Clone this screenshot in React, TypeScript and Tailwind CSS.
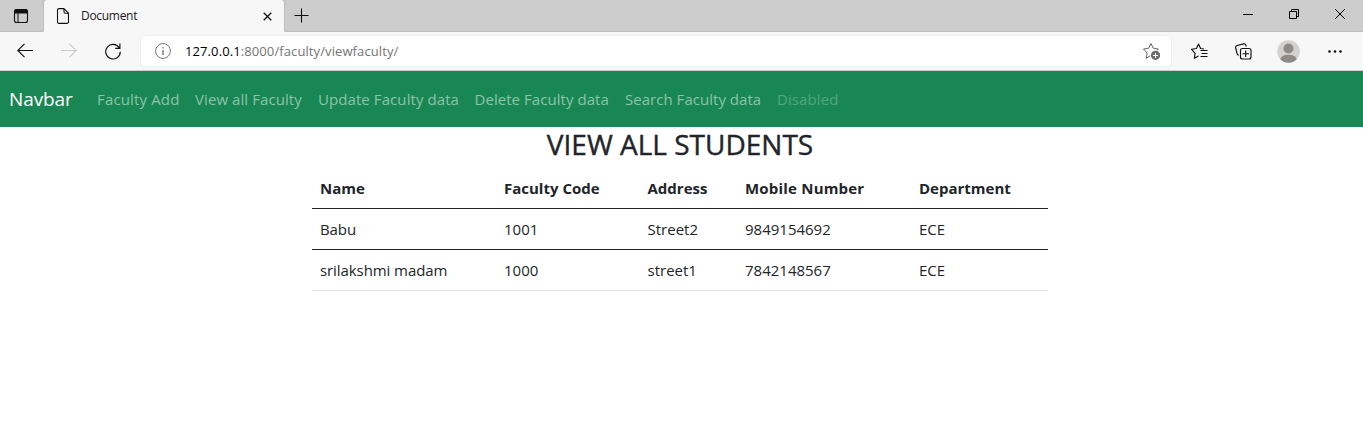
import React from "react";

const navItems = [
  { label: "Faculty Add", cls: "w-[82.5px] tracking-[0.15px]" },
  { label: "View all Faculty", cls: "w-[107.5px] tracking-[0.08px]" },
  { label: "Update Faculty data", cls: "w-[141px] tracking-[0.08px]" },
  { label: "Delete Faculty data", cls: "w-[135px] tracking-[0.05px]" },
  { label: "Search Faculty data", cls: "w-[136.5px] tracking-[0.03px]" },
];

const headers = ["Name", "Faculty Code", "Address", "Mobile Number", "Department"];

const faculty = [
  ["Babu", "1001", "Street2", "9849154692", "ECE"],
  ["srilakshmi madam", "1000", "street1", "7842148567", "ECE"],
];

function TabStrip() {
  return (
    <div className="flex h-8 bg-[#cdcdcd]">
      <div className="flex w-11 items-center justify-center rounded-br-[4px] border-r border-b border-[#bdbdbd]">
        <svg className="-ml-[1px] block h-4 w-4" viewBox="0 0 16 16" fill="none" stroke="#111">
          <rect x="1.5" y="1.5" width="13" height="13" rx="2" strokeWidth="1.1" />
          <path d="M1.5 5V3.5a2 2 0 0 1 2-2h9a2 2 0 0 1 2 2V5z" fill="#111" />
          <path d="M5 5v9.5" />
        </svg>
      </div>
      <div className="flex h-8 w-60 items-center rounded-t-[4px] bg-[#f7f7f7]">
        <svg className="ml-3 block h-4 w-[14px]" viewBox="0 0 14 16" fill="none" stroke="#111" strokeWidth="1.1" strokeLinejoin="round">
          <path d="M3 .6h5l4.5 4.6v8.7a1.5 1.5 0 0 1-1.5 1.5H3a1.5 1.5 0 0 1-1.5-1.5V2.1A1.5 1.5 0 0 1 3 .6zM8 .6v3.2a1.4 1.4 0 0 0 1.4 1.4h3.1" />
        </svg>
        <span className="ml-[11px] flex-1 text-[12px] leading-4 tracking-[-0.3px] text-[#1b1b1b]">Document</span>
        <svg className="mr-3 block h-[9px] w-[9px]" viewBox="0 0 9 9" stroke="#111" strokeWidth="1.3">
          <path d="M.7.7l7.6 7.6M8.3.7L.7 8.3" />
        </svg>
      </div>
      <div className="flex flex-1 items-center rounded-bl-[4px] border-b border-l border-[#bdbdbd] pl-[9px]">
        <svg className="block h-[15px] w-[15px]" viewBox="0 0 15 15" stroke="#111" strokeWidth="1.1">
          <path d="M.5 7.5h14M7.5.5v14" />
        </svg>
      </div>
      <div className="flex w-[138px] justify-between border-b border-[#bdbdbd] pt-[8px] pr-[17px] pl-[18px]">
        <svg className="block h-3 w-[10px]" viewBox="0 0 10 12" stroke="#000">
          <path d="M0 6.5h10" />
        </svg>
        <svg className="block h-3 w-3" viewBox="0 0 12 12" fill="none" stroke="#000">
          <path d="M1.5 3.5h7v7h-7zM3.500 3.500v-2h7v7h-2" />
        </svg>
        <svg className="block h-3 w-3" viewBox="0 0 12 12" stroke="#000">
          <path d="M1 1l10 10M11 1L1 11" />
        </svg>
      </div>
    </div>
  );
}

function Toolbar() {
  return (
    <div className="flex h-[39px] border-b border-[#cfcfcf] bg-[#f7f7f7] pt-1">
      <div className="flex h-[30px] w-[141px] items-center pl-[17px]">
        <svg className="block h-4 w-4" viewBox="0 0 16 16" fill="none" stroke="#111" strokeWidth="1.15">
          <path d="M16 7.500H.8M7.500.8L.8 7.500l6.700 6.700" />
        </svg>
        <svg className="ml-7 block h-4 w-4" viewBox="0 0 16 16" fill="none" stroke="#cacaca" strokeWidth="1.15">
          <path d="M0 7.500h15.200M8.500.8l6.700 6.700-6.700 6.700" />
        </svg>
        <svg className="ml-7 block h-[17px] w-4" viewBox="0 0 16 17" fill="none" stroke="#111" strokeWidth="1.15">
          <path d="M14.300 5A7.300 7.300 0 1 0 15.300 8.700M14.900.500V5.300H10.200" />
        </svg>
      </div>
      <div className="flex h-[30px] w-[1030px] items-center rounded-[4px] bg-white shadow-[0_0_2px_rgba(0,0,0,0.12)]">
        <svg className="ml-[14px] block h-4 w-4" viewBox="0 0 16 16" fill="none" stroke="#767676">
          <circle cx="8" cy="8" r="7.4" />
          <path d="M8 7v5M8 4.200v1.400" strokeWidth="1.4" />
        </svg>
        <span className="ml-[14px] flex-1 text-[13px] leading-5 tracking-[0.1px] text-[#757575]">
          <span className="text-black">127.0.0.1</span>:8000/faculty/viewfaculty/
        </span>
        <svg className="mr-[11px] block h-[18px] w-[18px]" viewBox="0 0 18 18" fill="none" stroke="#686868">
          <path d="M8 13.800L4.300 16.300l.8-5.300L1.500 7l5.200-.8L9 1.500l2.200 4.700 5.200.8L15 8.500" strokeLinejoin="round" />
          <circle cx="13.500" cy="13.300" r="4.600" fill="#6b6b6b" stroke="none" />
          <path d="M11 13.500h5M13.500 11v5" stroke="#fff" />
        </svg>
      </div>
      <div className="flex h-[30px] flex-1 items-center">
        <svg className="ml-5 block h-[17px] w-[17px]" viewBox="0 0 17 17" fill="none" stroke="#111" strokeWidth="1.15" strokeLinejoin="round">
          <path d="M7.500 13L3.300 15.300l.8-5L.6 6.300l4.800-.8L7.500 1l2.100 4.500 3.400.5M9.500 7.500h7M10.500 10.500h6M9.500 13.500h7" />
        </svg>
        <svg className="ml-[27px] block h-[17px] w-[17px]" viewBox="0 0 17 17" fill="none" stroke="#111" strokeWidth="1.15">
          <rect x="5.500" y="5.500" width="10.500" height="10.500" rx="2" />
          <path d="M10.700 7.500v6.500M7.500 10.700h6.500M3.700 12.300C2.700 12 2.300 11.500 2 10.500L.7 5c-.3-1.200.2-2.200 1.400-2.500L8.500.9c1.200-.3 2.200.2 2.500 1.400l.3 1.200" />
        </svg>
        <svg className="ml-[25px] block h-[23px] w-[23px]" viewBox="0 0 23 23">
          <circle cx="11.500" cy="11.500" r="11.300" fill="#d4d2d0" />
          <circle cx="11.500" cy="8.500" r="5" fill="#8e8a88" />
          <path d="M3.300 19.300c1-3.800 4.500-4.600 8.200-4.600s7.200.8 8.200 4.600a11.300 11.300 0 0 1-16.400 0z" fill="#8e8a88" />
        </svg>
        <svg className="ml-[28px] block h-[3px] w-[14px]" viewBox="0 0 14 3" fill="#111">
          <circle cx="1.500" cy="1.500" r="1.300" />
          <circle cx="7" cy="1.500" r="1.300" />
          <circle cx="12.500" cy="1.500" r="1.300" />
        </svg>
      </div>
    </div>
  );
}

export default function App() {
  return (
    <div className="h-[445px] w-[1363px] overflow-hidden bg-white font-['Open_Sans','Noto_Sans',sans-serif] text-[#212529]">
      <TabStrip />
      <Toolbar />
      <nav className="flex h-14 items-center bg-[#198754] pl-[9px] whitespace-nowrap">
        <a className="w-[88px] text-[19px] leading-[30px] tracking-[-0.1px] text-white">Navbar</a>
        <div className="flex gap-x-[15.5px] text-[15px] leading-6 text-[#8cc3aa]">
          {navItems.map((item) => (
            <a key={item.label} className={item.cls}>{item.label}</a>
          ))}
          <a className="tracking-[0.1px] text-[#53a580]">Disabled</a>
        </div>
      </nav>
      <main>
        <h3 className="mb-2 h-8 pr-[3px] text-center text-[28px] leading-[34px] font-medium [-webkit-text-stroke:0.4px_#212529]">VIEW ALL STUDENTS</h3>
        <table className="ml-[312px] w-[736px] table-fixed border-collapse text-left text-[15px] leading-6 whitespace-nowrap">
          <colgroup>
            <col className="w-[184px]" />
            <col className="w-[143.5px]" />
            <col className="w-[97.5px]" />
            <col className="w-[174px]" />
            <col className="w-[137px]" />
          </colgroup>
          <thead>
            <tr className="h-[41px] border-b border-[#212529]">
              {headers.map((h) => (
                <th key={h} className={h === "Mobile Number" ? "px-2 pt-px pb-0 font-bold tracking-[0.2px]" : "px-2 pt-px pb-0 font-bold"}>{h}</th>
              ))}
            </tr>
          </thead>
          <tbody>
            {faculty.map((row, i) => (
              <tr key={row[0]} className={i === 0 ? "h-[41px] border-b border-[#212529]" : "h-[41px] border-b border-[#dee2e6]"}>
                {row.map((cell, j) => (
                  <td key={j} className={j === 0 ? "px-2 py-0 tracking-[-0.08px]" : "px-2 py-0"}>{cell}</td>
                ))}
              </tr>
            ))}
          </tbody>
        </table>
      </main>
    </div>
  );
}
